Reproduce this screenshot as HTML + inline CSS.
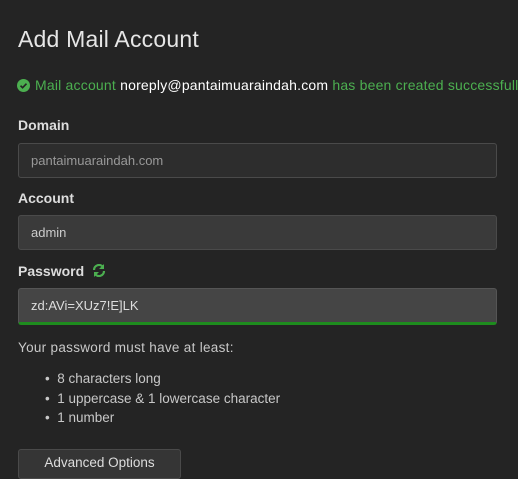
<!DOCTYPE html>
<html><head><style>
body{margin:0;background:#242424;width:518px;height:471px;overflow:hidden;font-family:"Liberation Sans",sans-serif;color:#cfcfcf;position:relative}
.a{position:absolute;white-space:nowrap}
.h{left:18px;top:26px;font-size:23px;color:#e6e6e6;letter-spacing:0.2px}
.ok{left:17px;top:77px;font-size:14px;color:#4caf50;letter-spacing:0.2px}
.ok b{color:#fff;font-weight:normal}
.l{left:18px;font-size:14px;font-weight:bold;color:#ddd}
.in{left:18px;width:479px;height:35px;background:#2d2d2d;border:1px solid #4a4a4a;border-radius:3px;box-sizing:border-box;font-size:13px;color:#999;padding:9px 12px;line-height:16px}
.ul{left:45px;font-size:13.5px;color:#c8c8c8;line-height:19.5px}
</style></head><body>
<div class="a h">Add Mail Account</div>
<div class="a ok"><svg width="13" height="13" viewBox="0 0 14 14" style="vertical-align:-2px;margin-right:5px"><circle cx="7" cy="7" r="7" fill="#4caf50"/><path d="M3.8 7.2l2.2 2.2 4.2-4.4" stroke="#242424" stroke-width="1.8" fill="none"/></svg>Mail account <b>noreply@pantaimuaraindah.com</b> has been created successfully</div>
<div class="a l" style="top:117px">Domain</div>
<div class="a in" style="top:143px">pantaimuaraindah.com</div>
<div class="a l" style="top:190px">Account</div>
<div class="a in" style="top:215px;background:#3a3a3a;color:#ccc">admin</div>
<div class="a l" style="top:263px">Password <svg width="14" height="13" viewBox="0 0 14 13" style="vertical-align:-1px;margin-left:4px"><path d="M2 6a5 5 0 0 1 9-3M12 7a5 5 0 0 1-9 3" stroke="#4caf50" stroke-width="2.2" fill="none"/><path d="M12 0v5H7zM2 13V8h5z" fill="#4caf50"/></svg></div>
<div class="a in" style="top:288px;height:37px;background:#454545;border-color:#555;border-bottom:3px solid #1e8c1e;color:#ddd">zd:AVi=XUz7!E]LK</div>
<div class="a" style="left:18px;top:340px;font-size:13.5px;color:#c8c8c8;letter-spacing:0.3px">Your password must have at least:</div>
<div class="a ul" style="top:369px">•&nbsp; 8 characters long<br>•&nbsp; 1 uppercase &amp; 1 lowercase character<br>•&nbsp; 1 number</div>
<div class="a" style="left:18px;top:449px;width:163px;height:30px;background:#353535;border:1px solid #4a4a4a;border-radius:3px;box-sizing:border-box;text-align:center;font-size:13.5px;color:#ddd;padding-top:5px">Advanced Options</div>
</body></html>
